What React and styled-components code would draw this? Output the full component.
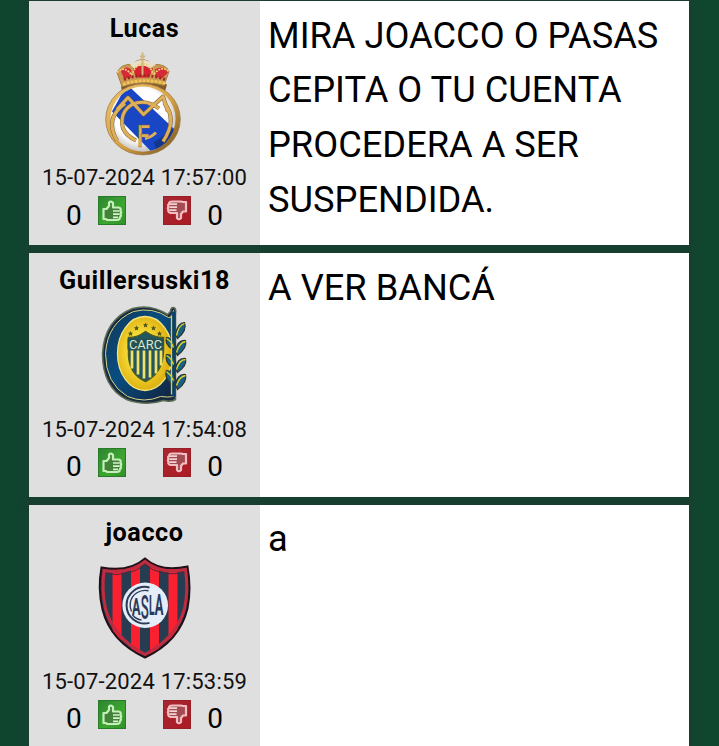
import React from "react";
import styled, { createGlobalStyle } from "styled-components";

const GlobalStyle = createGlobalStyle`
  * { box-sizing: border-box; }
  html, body { margin: 0; height: 100%; overflow: hidden; background: #11432f; }
  body { font-family: Roboto, "Liberation Sans", sans-serif; color: #000; }
`;

const Page = styled.main`
  height: 746px;
  overflow: hidden;
  padding: 1.4px 30px 0 29px;
  background: linear-gradient(90deg, #0f452f 0, #11432f 24px, #173f30 29px, #173f30 689px, #124530 695px, #0e472e 100%);
`;

const CommentList = styled.div`
  display: flex;
  flex-direction: column;
  gap: 8px;
`;

const Comment = styled.article`
  display: grid;
  grid-template-columns: 231px 1fr;
  height: 243.8px;
  background: #fff;
`;

const Author = styled.aside`
  display: flex;
  flex-direction: column;
  align-items: center;
  padding-top: 13px;
  background: #dfdfdf;
`;

const Name = styled.strong`
  font-size: 25.2px;
  line-height: 30px;
  font-weight: 700;
  letter-spacing: 0.55px;
  white-space: nowrap;
`;

const Crest = styled.svg`
  display: block;
  width: 101px;
  height: 108px;
  margin-top: 7px;
`;

const Stamp = styled.time`
  margin-top: 5.6px;
  font-size: 22px;
  line-height: 26px;
  letter-spacing: 0.2px;
  white-space: nowrap;
  color: #111;
`;

const Votes = styled.div`
  display: grid;
  grid-template-columns: 32px 28px 37px 28px 32px;
  justify-content: center;
  align-items: start;
  margin-top: 5.4px;
`;

const Count = styled.span`
  grid-column: ${(p) => p.$column};
  justify-self: ${(p) => p.$side};
  padding-top: 3.2px;
  font-size: 28px;
  line-height: 32px;
`;

const VoteButton = styled.button`
  grid-column: ${(p) => p.$column};
  display: block;
  width: 28px;
  height: 29px;
  padding: 0;
  border: 0;
  background: none;

  svg { display: block; width: 100%; height: 100%; }
`;

const Message = styled.p`
  margin: 0;
  padding: 7.4px 8px;
  font-size: 36.25px;
  line-height: 54.7px;
`;

const Monogram = styled.text`
  font-family: Roboto, sans-serif;
  font-weight: ${(p) => p.$weight || 700};
`;

function MadridCrest() {
  return (
    <Crest viewBox="94 51.5 101 108">
      <defs>
        <linearGradient id="madridGold" x1="0" y1="0" x2="1" y2="1">
          <stop offset="0" stopColor="#ecc36c" />
          <stop offset=".55" stopColor="#d7a141" />
          <stop offset="1" stopColor="#6a4b1f" />
        </linearGradient>
        <radialGradient id="madridWhite" cx=".46" cy=".43" r=".56">
          <stop offset=".72" stopColor="#fff" />
          <stop offset="1" stopColor="#c9c6c4" />
        </radialGradient>
        <clipPath id="madridClip"><circle cx="143" cy="119.6" r="32.6" /></clipPath>
      </defs>
      <path d="M121 87Q142 77 167 85L165 92Q143 84 122 92Z" fill="#7f5b25" />
      <path d="M122 87L117 73Q121 64 132 65Q142 55 153 65Q166 64 169 72L164 86Q144 80 122 87Z" fill="#c99a50" stroke="#a87c43" />
      <path d="M121 72Q126 65 131 70L132 78L124 79Z M155 70Q164 65 168 73L162 79L155 77Z" fill="#d52b38" />
      <path d="M133 69Q142 63 153 69L149 78L136 78Z" fill="#d9222f" />
      <path d="M130 65Q142 56 156 65L150 69Q142 63 134 69Z" fill="#eadfc9" />
      <path d="M117 73Q124 65 132 76Q135 65 142.5 64Q151 65 153 76Q161 65 169 72" fill="none" stroke="#f0ce7d" strokeWidth="1.8" strokeDasharray="2 1" />
      <path d="M142.5 53V76M140 57H145" stroke="#d0b680" strokeWidth="2" />
      <path d="M124 80Q143 72 165 80" fill="none" stroke="#9e2721" strokeWidth="3" strokeDasharray="2 2" />
      <path d="M123 85Q143 78 165 84" fill="none" stroke="#f0c454" strokeWidth="3" strokeDasharray="3 1" />
      <ellipse cx="143" cy="119.8" rx="37.3" ry="35.6" fill="url(#madridGold)" stroke="#9e7847" strokeWidth=".8" />
      <circle cx="143" cy="119.6" r="32.6" fill="url(#madridWhite)" />
      <g clipPath="url(#madridClip)">
        <path d="M112 112L127 85L182 137L160 161Z" fill="#1846c4" />
        <path d="M154 143L178 126L180 155L160 162Z" fill="#102967" opacity=".6" />
      </g>
      <g fill="none" stroke="#806134" strokeWidth="4" strokeLinejoin="round">
        <path d="M117 141Q104 119 125 104M163 142Q178 120 164 103" />
        <path d="M117 110L128 98L143.5 115L163 97L168 112" />
        <path d="M159 109Q146 99 132 105Q119 113 123 129Q127 137 136 141" />
      </g>
      <g fill="none" stroke="#dfb05a" strokeWidth="3" strokeLinejoin="round">
        <path d="M117 141Q104 119 125 104M163 142Q178 120 164 103" />
        <path d="M117 110L128 98L143.5 115L163 97L168 112" />
        <path d="M159 109Q146 99 132 105Q119 113 123 129Q127 137 136 141M145 139Q151 138 156 133" />
      </g>
      <Monogram x="137" y="147" fontSize="32" textLength="13" lengthAdjust="spacingAndGlyphs" $weight={500} fill="#dfb05a" stroke="#806134" strokeWidth=".4">F</Monogram>
    </Crest>
  );
}

function CentralCrest() {
  return (
    <Crest viewBox="93.5 303.5 101 108">
      <defs>
        <linearGradient id="centralBlue" x1="0" y1="0" x2="1" y2="1">
          <stop offset="0" stopColor="#123859" />
          <stop offset=".45" stopColor="#084d80" />
          <stop offset="1" stopColor="#12223f" />
        </linearGradient>
        <radialGradient id="centralYellow" cx=".45" cy=".48">
          <stop offset=".35" stopColor="#ffe943" />
          <stop offset="1" stopColor="#dfb414" />
        </radialGradient>
      </defs>
      <path d="M170 312Q170 308 173 308Q176 309 175 314V400Q170 403 163 401Q145 407 126 400Q102 388 102 354Q104 320 132 309Q150 304 167 315Z" fill="#172d3e" stroke="#5e6d57" strokeWidth="1.5" />
      <path d="M170 318L173 311V397Q167 398 160 397Q144 404 127 397Q105 384 105 354Q107 323 133 312Q152 307 168 318Z" fill="url(#centralBlue)" stroke="#d8d387" strokeWidth="1" />
      <ellipse cx="144.5" cy="354" rx="27.5" ry="37" fill="url(#centralYellow)" stroke="#f2e681" strokeWidth="1.3" />
      <path d="M173 312V397" stroke="#0b426c" strokeWidth="4.5" />
      <g fill="#176184" stroke="#28342c" strokeWidth="1.2">
        <path d="M175 335Q177 323 184 323Q187 331 177 339ZM175 352Q177 340 185 341Q187 348 177 356ZM175 369Q177 358 185 359Q187 366 177 373ZM175 385Q177 374 185 375Q187 383 177 390Z" />
        <path d="M172 350Q164 345 166 338Q174 338 175 348ZM172 368Q164 363 166 355Q174 355 175 364ZM172 385Q163 379 166 371Q174 371 175 381Z" />
      </g>
      <path d="M176 336Q178 326 184 324M176 353Q179 343 185 342M176 370Q179 360 185 360M176 386Q179 377 185 376M166 339Q171 342 173 348M166 356Q171 359 173 365M166 372Q171 376 173 381M171 316V395" fill="none" stroke="#e7cf27" strokeWidth="1.3" />
      <path d="M128 338Q137 338 145 332Q154 338 163 338V352Q162 374 145 382Q129 375 128 356Z" fill="#245660" stroke="#4d5c22" strokeWidth="1.5" />
      <path d="M131.5 351V369M137.5 351V375M143.5 351V379M149.5 351V378M155.5 351V374M160.5 351V366" stroke="#f0e16b" strokeWidth="2.7" />
      <path d="M127 339H163V350H127Z" fill="#245153" />
      <Monogram x="128.5" y="349" fontSize="12" fill="#dce6ce" textLength="33" lengthAdjust="spacingAndGlyphs" $weight={400}>CARC</Monogram>
      {[[130, 334], [136, 328.5], [145, 325.5], [153, 328.5], [159, 334]].map(([x, y]) => (
        <path key={x} transform={`translate(${x} ${y}) scale(.85)`} d="M0-3L1-.9L3-.8L1.5.7L2 3L0 1.8L-2 3L-1.5.7L-3-.8L-1-.9Z" fill="#4d5618" />
      ))}
    </Crest>
  );
}

function LorenzoCrest() {
  const shield = "M101 567Q129 572 144.5 558Q160 572 187 566Q191 588 187 608Q179 641 144.5 657Q110 641 102 609Q97 588 101 567Z";
  return (
    <Crest viewBox="93.5 554.5 101 108">
      <defs><clipPath id="lorenzoShield"><path d={shield} /></clipPath></defs>
      <path d={shield} fill="#263c50" />
      <g clipPath="url(#lorenzoShield)" fill="#f92130">
        <path d="M112 558H121V652H112ZM130.5 558H139.5V660H130.5ZM149.5 558H158.5V660H149.5ZM168 558H177V650H168Z" />
      </g>
      <path d={shield} fill="none" stroke="#211018" strokeWidth="2" />
      <path d="M103.5 570Q129 574 144.5 561Q160 574 185 569Q188 590 184 608Q176 638 144.5 654Q113 638 105 608Q101 590 103.5 570Z" fill="none" stroke="#c02b40" strokeWidth="3" />
      <path d="M105 573Q129 577 144.5 564Q160 577 184 572" fill="none" stroke="#57243a" strokeWidth="1" />
      <circle cx="144.7" cy="604.8" r="22.8" fill="#e4edf8" />
      <path d="M149 587A18.3 18.3 0 1 0 149 622.4" fill="none" stroke="#2c3a56" strokeWidth="2" />
      <path d="M148 590.3A15 15 0 0 0 129.8 602Q129 607 131 611M132 614.5Q136 619 141 619.5" fill="none" stroke="#2c3a56" strokeWidth="1.4" />
      <g fill="#2b3a58">
        <Monogram x="131.5" y="614" fontSize="24" textLength="8.5" lengthAdjust="spacingAndGlyphs">A</Monogram>
        <Monogram x="140.3" y="618" fontSize="34" textLength="8" lengthAdjust="spacingAndGlyphs" $weight={500}>S</Monogram>
        <Monogram x="148.5" y="614" fontSize="28" textLength="5.6" lengthAdjust="spacingAndGlyphs">L</Monogram>
        <Monogram x="154.3" y="614" fontSize="29" textLength="8.7" lengthAdjust="spacingAndGlyphs">A</Monogram>
      </g>
    </Crest>
  );
}

function ThumbUp() {
  return (
    <svg viewBox="0 0 28 29" aria-hidden="true">
      <defs><linearGradient id="upGreen" x1="0" y1="0" x2="1" y2="1"><stop stopColor="#2d8530" /><stop offset=".6" stopColor="#3da62f" /><stop offset="1" stopColor="#318f29" /></linearGradient></defs>
      <rect x=".5" y=".5" width="27" height="28" fill="url(#upGreen)" stroke="#287c28" />
      <path d="M5.5 13H8.5L11 10V6.5Q13 4.5 15 7V11.5H20.5Q23.5 12 22.5 14.8Q23.8 16.5 22.5 18Q23.6 20 22 21Q22 24 19 24H9L8 23H5.5Z" fill="#428339" stroke="#c5efba" strokeWidth="2.2" strokeLinejoin="round" />
      <path d="M15 15H21.5M15 18.2H21.5M15 21.3H20" stroke="#d6f4ce" strokeWidth="1.7" />
    </svg>
  );
}

function ThumbDown() {
  return (
    <svg viewBox="0 0 28 29" aria-hidden="true">
      <defs><linearGradient id="downRed" x1="0" y1="0" x2="1" y2="1"><stop stopColor="#a72630" /><stop offset="1" stopColor="#ad1b23" /></linearGradient></defs>
      <rect x=".5" y=".5" width="27" height="28" fill="url(#downRed)" stroke="#96202a" />
      <path d="M23 15.5H20L18 18V22Q16 24.5 14 22V17H7.5Q4.5 16 5.5 14Q4.2 12 5.5 11Q4.5 9 6 8Q6 5.5 9 5.5H18L20 6H23Z" fill="#a34b53" stroke="#f1bec2" strokeWidth="2.2" strokeLinejoin="round" />
      <path d="M6.5 8.2H14M6.5 11.2H14M6.5 14.2H13.5" stroke="#f5d1d2" strokeWidth="1.7" />
    </svg>
  );
}

const comments = [
  { name: "Lucas", date: "15-07-2024 17:57:00", text: "MIRA JOACCO O PASAS CEPITA O TU CUENTA PROCEDERA A SER SUSPENDIDA.", crest: MadridCrest },
  { name: "Guillersuski18", date: "15-07-2024 17:54:08", text: "A VER BANCÁ", crest: CentralCrest },
  { name: "joacco", date: "15-07-2024 17:53:59", text: "a", crest: LorenzoCrest },
];

export default function App() {
  return (
    <>
      <GlobalStyle />
      <Page>
        <CommentList>
          {comments.map(({ name, date, text, crest: TeamCrest }) => (
            <Comment key={name}>
              <Author>
                <Name>{name}</Name>
                <TeamCrest />
                <Stamp>{date}</Stamp>
                <Votes>
                  <Count $column={1} $side="start">0</Count>
                  <VoteButton $column={2} aria-label="Me gusta"><ThumbUp /></VoteButton>
                  <VoteButton $column={4} aria-label="No me gusta"><ThumbDown /></VoteButton>
                  <Count $column={5} $side="end">0</Count>
                </Votes>
              </Author>
              <Message>{text}</Message>
            </Comment>
          ))}
        </CommentList>
      </Page>
    </>
  );
}
